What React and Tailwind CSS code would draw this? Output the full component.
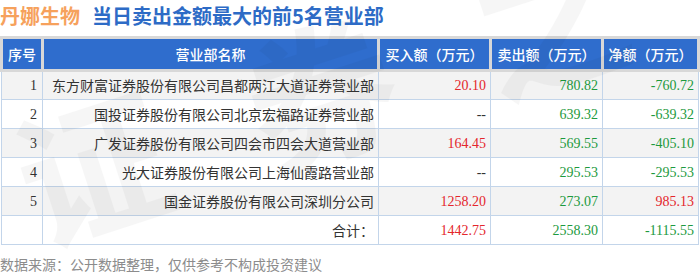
import React from "react";

const rows = [
  { no: "1", name: "东方财富证券股份有限公司昌都两江大道证券营业部", buy: "20.10", sell: "780.82", net: "-760.72" },
  { no: "2", name: "国投证券股份有限公司北京宏福路证券营业部", buy: "--", sell: "639.32", net: "-639.32" },
  { no: "3", name: "广发证券股份有限公司四会市四会大道营业部", buy: "164.45", sell: "569.55", net: "-405.10" },
  { no: "4", name: "光大证券股份有限公司上海仙霞路营业部", buy: "--", sell: "295.53", net: "-295.53" },
  { no: "5", name: "国金证券股份有限公司深圳分公司", buy: "1258.20", sell: "273.07", net: "985.13" },
];

const red = "text-[#e4262c]";
const green = "text-[#1d9a3e]";

function numColor(v) {
  if (v === "--") return "text-[#333]";
  return v.startsWith("-") ? green : red;
}

export default function App() {
  return (
    <div className="relative w-[700px] h-[274px] overflow-hidden bg-white font-['Noto_Sans_CJK_SC',sans-serif]">
      <div className="flex items-center gap-3 h-[30px] pt-[1px] font-bold text-[20px] leading-[28px]">
        <span className="text-[#f6a15c]">丹娜生物</span>
        <span className="text-[#2d6bc6]">当日卖出金额最大的前5名营业部</span>
      </div>

      <table className="mt-[6px] w-[697px] table-fixed border-collapse text-[14px]">
        <colgroup>
          <col className="w-[41px]" />
          <col className="w-[336px]" />
          <col className="w-[112px]" />
          <col className="w-[112px]" />
          <col className="w-[96px]" />
        </colgroup>
        <thead>
          <tr className="h-[33px] bg-[#2f6dcd] text-white">
            <th className="border-[3px] border-[#d8d8d8] font-medium text-center">序号</th>
            <th className="border-[3px] border-[#d8d8d8] font-medium text-center">营业部名称</th>
            <th className="border-[3px] border-[#d8d8d8] font-medium text-center">买入额（万元）</th>
            <th className="border-[3px] border-[#d8d8d8] font-medium text-center">卖出额（万元）</th>
            <th className="border-[3px] border-[#d8d8d8] font-medium text-center">净额（万元）</th>
          </tr>
        </thead>
        <tbody className="font-['Liberation_Serif','Noto_Sans_CJK_SC',serif] text-[#333]">
          {rows.map((r, i) => (
            <tr key={r.no} className={`h-[29px] ${i % 2 === 0 ? "bg-[#f3f3f3]" : "bg-white"}`}>
              <td className="border border-[#c3d5ea] text-right pr-[5px]">{r.no}</td>
              <td className="border border-[#c3d5ea] text-right pr-[4px] font-['Noto_Sans_CJK_SC',sans-serif]">{r.name}</td>
              <td className={`border border-[#c3d5ea] text-right pr-[4px] ${numColor(r.buy)}`}>{r.buy}</td>
              <td className={`border border-[#c3d5ea] text-right pr-[4px] ${green}`}>{r.sell}</td>
              <td className={`border border-[#c3d5ea] text-right pr-[4px] ${numColor(r.net)}`}>{r.net}</td>
            </tr>
          ))}
          <tr className="h-[29px] bg-white">
            <td className="border border-[#c3d5ea]"></td>
            <td className="border border-[#c3d5ea] text-right pr-[4px] font-['Noto_Sans_CJK_SC',sans-serif]">合计：</td>
            <td className={`border border-[#c3d5ea] text-right pr-[4px] ${red}`}>1442.75</td>
            <td className={`border border-[#c3d5ea] text-right pr-[4px] ${green}`}>2558.30</td>
            <td className={`border border-[#c3d5ea] text-right pr-[4px] ${green}`}>-1115.55</td>
          </tr>
        </tbody>
      </table>

      <p className="mt-[9px] text-[14px] leading-[20px] text-[#8c8c8c]">数据来源：公开数据整理，仅供参考不构成投资建议</p>

      {/* watermark */}
      <div className="pointer-events-none select-none absolute left-[20px] top-[110px] -rotate-[18deg] origin-left text-[150px] font-bold leading-none tracking-[90px] text-black opacity-[0.03] whitespace-nowrap" aria-hidden="true">
        证券之星
      </div>
    </div>
  );
}
